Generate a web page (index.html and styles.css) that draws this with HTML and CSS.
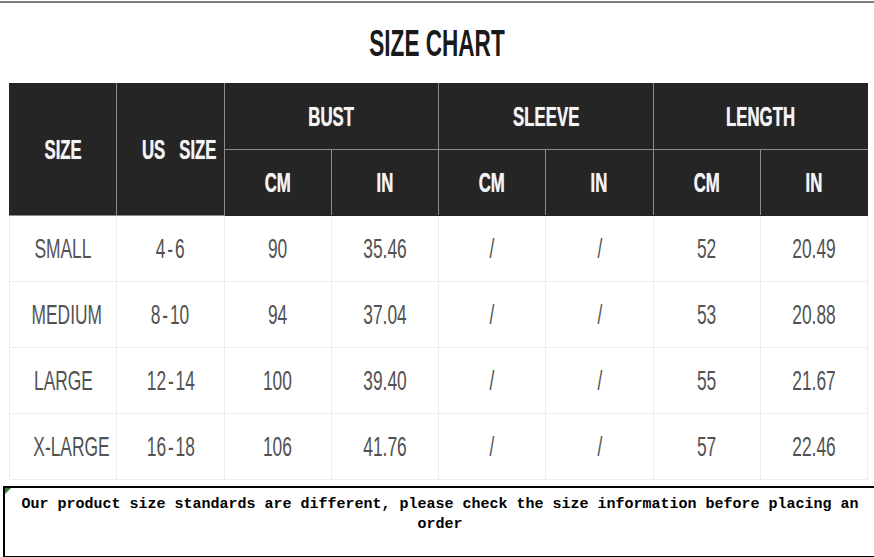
FILE: index.html
```html
<!DOCTYPE html>
<html>
<head>
<meta charset="utf-8">
<link rel="stylesheet" href="styles.css">
</head>
<body>
<div class="topline"></div>
<div class="title"><span class="cond">SIZE CHART</span></div>
<table class="chart">
  <colgroup>
    <col class="c"><col class="c"><col class="c"><col class="c"><col class="c"><col class="c"><col class="c"><col class="c">
  </colgroup>
  <thead>
    <tr>
      <th rowspan="2"><span class="cond">SIZE</span></th>
      <th rowspan="2"><span class="cond">US&nbsp;&nbsp;&nbsp;SIZE</span></th>
      <th colspan="2"><span class="cond">BUST</span></th>
      <th colspan="2"><span class="cond">SLEEVE</span></th>
      <th colspan="2"><span class="cond">LENGTH</span></th>
    </tr>
    <tr>
      <th><span class="cond">CM</span></th>
      <th><span class="cond">IN</span></th>
      <th><span class="cond">CM</span></th>
      <th><span class="cond">IN</span></th>
      <th><span class="cond">CM</span></th>
      <th><span class="cond">IN</span></th>
    </tr>
  </thead>
  <tbody>
    <tr><td><span class="cond">SMALL</span></td><td><span class="cond">4<span class="dash">-</span>6</span></td><td><span class="cond">90</span></td><td><span class="cond">35.46</span></td><td><span class="cond">/</span></td><td><span class="cond">/</span></td><td><span class="cond">52</span></td><td><span class="cond">20.49</span></td></tr>
    <tr><td><span class="cond">MEDIUM</span></td><td><span class="cond">8<span class="dash">-</span>10</span></td><td><span class="cond">94</span></td><td><span class="cond">37.04</span></td><td><span class="cond">/</span></td><td><span class="cond">/</span></td><td><span class="cond">53</span></td><td><span class="cond">20.88</span></td></tr>
    <tr><td><span class="cond">LARGE</span></td><td><span class="cond">12<span class="dash">-</span>14</span></td><td><span class="cond">100</span></td><td><span class="cond">39.40</span></td><td><span class="cond">/</span></td><td><span class="cond">/</span></td><td><span class="cond">55</span></td><td><span class="cond">21.67</span></td></tr>
    <tr><td><span class="cond">X-LARGE</span></td><td><span class="cond">16<span class="dash">-</span>18</span></td><td><span class="cond">106</span></td><td><span class="cond">41.76</span></td><td><span class="cond">/</span></td><td><span class="cond">/</span></td><td><span class="cond">57</span></td><td><span class="cond">22.46</span></td></tr>
  </tbody>
</table>
<div class="note">
  <span class="flag"></span>
  <p>Our product size standards are different, please check the size information before placing an order</p>
</div>
</body>
</html>
```
FILE: styles.css
```css
html, body {
  margin: 0;
  padding: 0;
  background: #ffffff;
  overflow: hidden;
}
body {
  width: 874px;
  height: 557px;
  font-family: "Liberation Sans Narrow", "Liberation Sans", sans-serif;
}
.topline {
  height: 2px;
  margin-top: 1px;
  background: #7d7d7d;
}
.title {
  height: 80px;
  display: flex;
  align-items: center;
  justify-content: center;
  font-size: 37px;
  font-weight: bold;
  color: #1a1a1a;
}
.title .cond {
  transform: scaleX(0.61);
  padding-top: 2px;
}
.chart {
  margin-left: 9px;
  border-collapse: collapse;
  table-layout: fixed;
  width: 858px;
}
.chart col.c {
  width: 107.25px;
}
.chart th, .chart td {
  padding: 0;
  text-align: center;
  vertical-align: middle;
  overflow: hidden;
}
.chart th {
  background: #252525;
  color: #f4f4f4;
  font-weight: bold;
  font-size: 28px;
  height: 65px;
  border: 1px solid #8c8c8c;
  text-shadow: 0 0 1px #bbbbbb;
}
.chart th .cond {
  transform: scaleX(0.6);
}
.chart thead tr:first-child th {
  border-top-color: #252525;
}
.chart thead th:first-child {
  border-left-color: #252525;
}
.chart thead tr:first-child th:last-child,
.chart thead tr:nth-child(2) th:last-child {
  border-right-color: #252525;
}
.chart thead tr:nth-child(2) th {
  border-bottom-color: #252525;
}
.chart td {
  height: 65px;
  color: #525252;
  font-size: 28px;
  border: 1px solid #ededed;
}
.cond {
  display: inline-block;
  transform: scaleX(0.62);
  white-space: nowrap;
}
.dash {
  margin: 0 3px;
}
.note {
  position: relative;
  margin-top: 6px;
  margin-left: 3px;
  width: 880px;
  height: 68px;
  border-top: 2px solid #000;
  border-bottom: 2px solid #000;
  border-left: 2px solid #000;
}
.note p {
  margin: 0;
  width: 870px;
  padding-top: 7px;
  text-align: center;
  font-family: "Liberation Mono", "DejaVu Sans Mono", monospace;
  font-weight: bold;
  font-size: 15px;
  line-height: 20px;
  color: #000;
}
.flag {
  position: absolute;
  left: 0;
  top: 0;
  width: 0;
  height: 0;
  border-top: 6px solid #2e7d32;
  border-right: 6px solid transparent;
}
```
